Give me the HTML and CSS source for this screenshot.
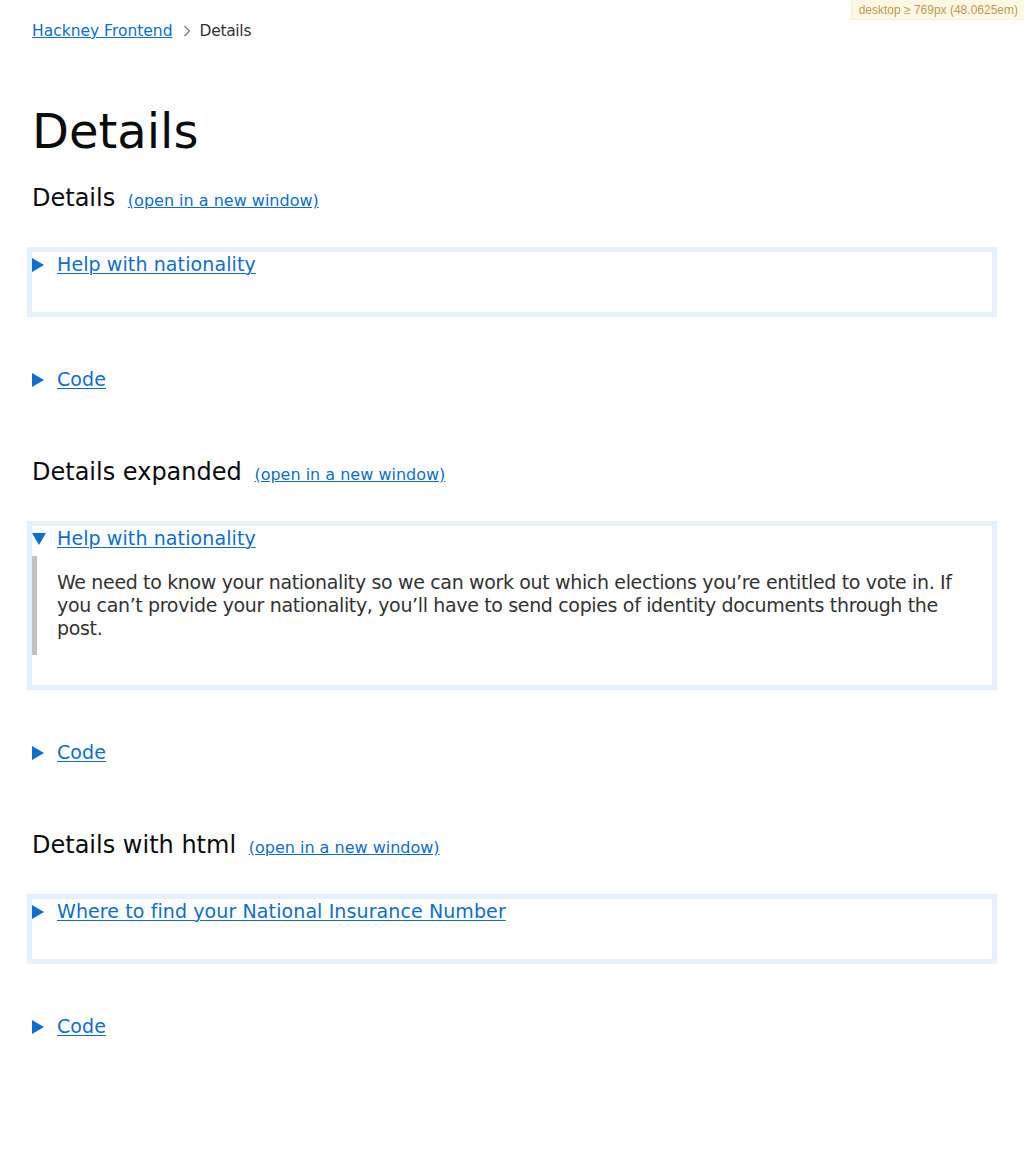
FILE: index.html
```html
<!DOCTYPE html>
<html lang="en">
<head>
<meta charset="utf-8">
<title>Details – Hackney Frontend</title>
<link rel="stylesheet" href="styles.css">
</head>
<body>
<div class="mq-badge">desktop ≥ 769px (48.0625em)</div>
<div class="page">
  <nav class="breadcrumbs">
    <a class="breadcrumbs-link" href="#">Hackney Frontend</a>
    <svg class="chevron" width="8" height="12" viewBox="0 0 8 12" aria-hidden="true"><path d="M1.5 1 L6.5 6 L1.5 11" fill="none" stroke="#6f777b" stroke-width="1.2"/></svg>
    <span class="breadcrumbs-current">Details</span>
  </nav>

  <h1 class="title">Details</h1>

  <section class="example">
    <h2 class="example-heading">Details <a class="new-window" href="#">(open in a new window)</a></h2>
    <div class="example-frame">
      <div class="details">
        <div class="summary"><span class="arrow"></span><a class="summary-text" href="#">Help with nationality</a></div>
      </div>
    </div>
    <div class="details">
      <div class="summary"><span class="arrow"></span><a class="summary-text" href="#">Code</a></div>
    </div>
  </section>

  <section class="example">
    <h2 class="example-heading">Details expanded <a class="new-window" href="#">(open in a new window)</a></h2>
    <div class="example-frame">
      <div class="details">
        <div class="summary"><span class="arrow open"></span><a class="summary-text" href="#">Help with nationality</a></div>
        <div class="details-text">We need to know your nationality so we can work out which elections you’re entitled to vote in. If you can’t provide your nationality, you’ll have to send copies of identity documents through the post.</div>
      </div>
    </div>
    <div class="details">
      <div class="summary"><span class="arrow"></span><a class="summary-text" href="#">Code</a></div>
    </div>
  </section>

  <section class="example">
    <h2 class="example-heading">Details with html <a class="new-window" href="#">(open in a new window)</a></h2>
    <div class="example-frame">
      <div class="details">
        <div class="summary"><span class="arrow"></span><a class="summary-text" href="#">Where to find your National Insurance Number</a></div>
      </div>
    </div>
    <div class="details">
      <div class="summary"><span class="arrow"></span><a class="summary-text" href="#">Code</a></div>
    </div>
  </section>
</div>
</body>
</html>
```

FILE: styles.css
```css
html, body {
  margin: 0;
  padding: 0;
  background: #ffffff;
}

body {
  font-family: "DejaVu Sans", "Noto Sans", sans-serif;
  color: #0b0c0c;
}

.mq-badge {
  position: absolute;
  top: 0;
  right: 0;
  background: #fcf8e3;
  border-left: 1px solid #fbeed5;
  border-bottom: 1px solid #fbeed5;
  color: #c09853;
  font-family: "Liberation Sans", Arial, sans-serif;
  font-size: 12px;
  line-height: 14px;
  padding: 3px 6px 2px 7px;
}

.page {
  padding: 0 32px;
}

.breadcrumbs {
  display: flex;
  align-items: center;
  margin-top: 21px;
  height: 20px;
  font-size: 15.5px;
  line-height: 20px;
}

.breadcrumbs-link {
  color: #0c6ecf;
  text-decoration: underline;
}

.chevron {
  margin: 0 9px 0 10px;
}

.breadcrumbs-current {
  color: #333333;
  letter-spacing: -0.3px;
}

.title {
  margin: 65px 0 0 0;
  font-size: 48px;
  line-height: 50px;
  font-weight: 400;
  color: #0b0c0c;
}

.example {
  display: flow-root;
  margin-top: 30px;
}

.example:first-of-type {
  margin-top: 27px;
}

.example-heading {
  margin: 0 0 34px 0;
  font-size: 24px;
  line-height: 30px;
  font-weight: 400;
  color: #0b0c0c;
}

.new-window {
  margin-left: 5px;
  font-size: 16px;
  line-height: 1;
  color: #0c6ecf;
  text-decoration: underline;
}

.example-frame {
  border: 5px solid #e5f1fd;
  margin: 0 -5px 50px -5px;
}

.details {
  display: flow-root;
  margin-bottom: 30px;
}

.summary {
  position: relative;
  padding-left: 25px;
  margin-bottom: 5px;
  font-size: 19px;
  line-height: 25px;
}

.summary-text {
  color: #0c6ecf;
  text-decoration: underline;
  text-decoration-thickness: 1px;
  text-underline-offset: 2px;
  letter-spacing: 0.1px;
}

.arrow {
  position: absolute;
  left: 0;
  top: 5.5px;
  width: 0;
  height: 0;
  border-style: solid;
  border-color: transparent;
  border-left-color: #0c6ecf;
  border-width: 7px 0 7px 12px;
}

.arrow.open {
  top: 6.5px;
  border-color: transparent;
  border-top-color: #0c6ecf;
  border-width: 12px 7px 0 7px;
}

.details-text {
  border-left: 5px solid #bfc1c3;
  padding: 15px 15px 15px 20px;
  font-size: 19px;
  line-height: 23px;
  letter-spacing: -0.35px;
  color: #333333;
}
```
